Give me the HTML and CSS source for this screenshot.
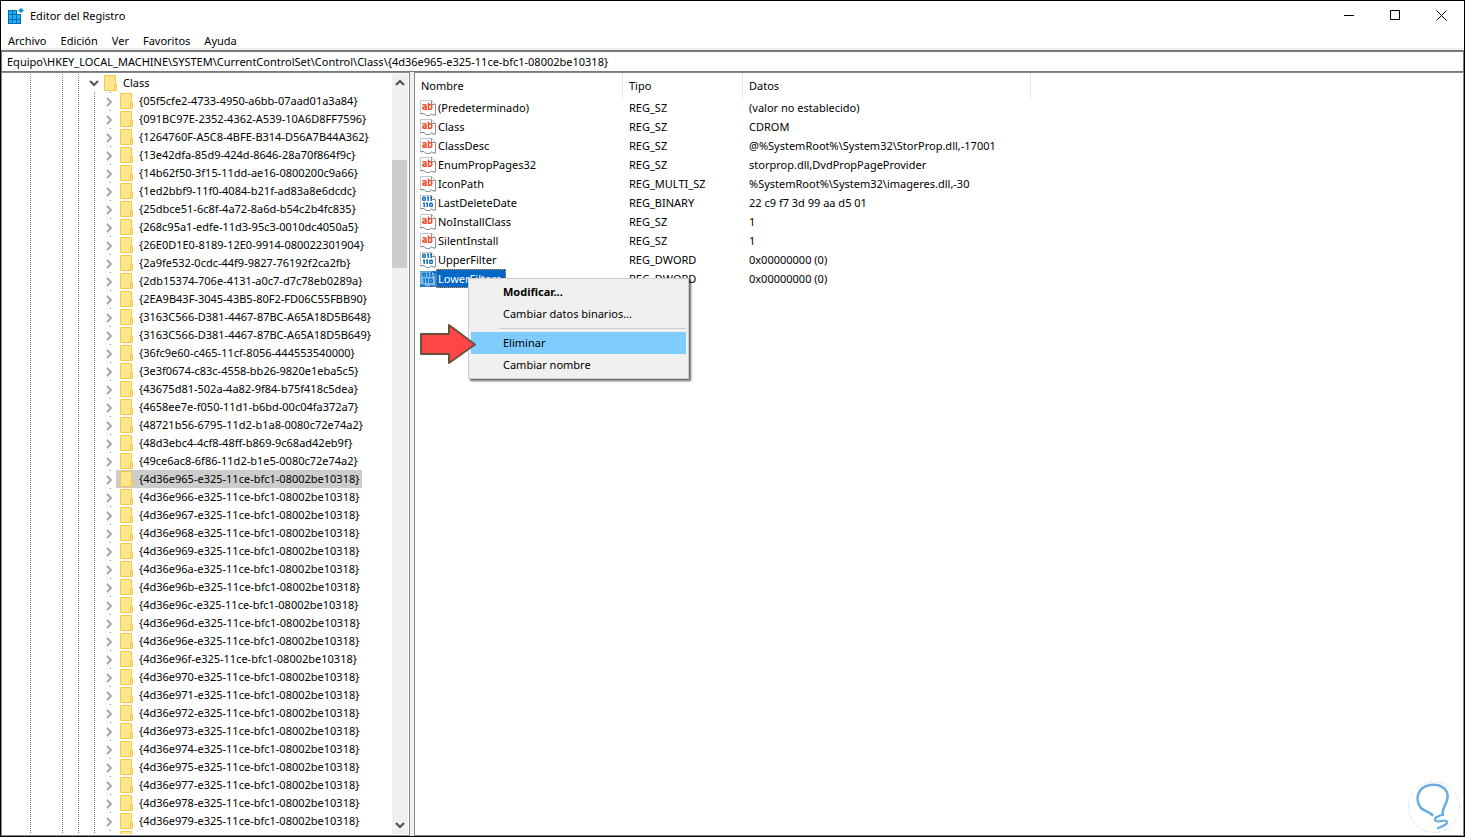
FILE: index.html
```html
<!DOCTYPE html>
<html lang="es">
<head>
<meta charset="utf-8">
<title>Editor del Registro</title>
<link rel="stylesheet" href="styles.css">
</head>
<body>
<svg class="sprite" aria-hidden="true">
  <symbol id="folder" viewBox="0 0 13 16"><path d="M.5.5h11v15H.5z" fill="#ffe68f" stroke="#fcc83c"/><path d="M10.500 9.500h2v6h-2z" fill="#ffe68f" stroke="#fcc83c"/></symbol>
  <symbol id="closed" viewBox="0 0 7 10"><path d="M1 1l4 4-4 4" fill="none" stroke="#a6a6a6" stroke-width="2"/></symbol>
  <symbol id="text" viewBox="0 0 16 16"><path d="M.5.5h11l4 4v10.500h-2l-2-1-2.500 1.500h-3L4 13.500l-2 .5H.5z" fill="#fff" stroke="#c4c6c8"/><path d="M11.500.5v4h4M15.500 4.500v10.500h-2l-2-1-2 1.500H6L4 13.500H.5" fill="none" stroke="#8a9299"/><g fill="none" stroke="#f04e2c" stroke-width="1.500"><path d="M2.500 4.700h2.500q1 0 1 1V10M6 7H4q-1.300 0-1.300 1.100T4 9.300h2M8.500 2.500V10M8.500 4.800h1.800q1.500 0 1.500 2.200t-1.500 2.200H8.500"/></g></symbol>
  <symbol id="binary" viewBox="0 0 16 16"><path d="M.5.5h11l4 4v10.500h-2l-2-1-2.500 1.500h-3L4 13.500l-2 .5H.5z" fill="#fff" stroke="#c4c6c8"/><path d="M11.500.5v4h4M15.500 4.500v10.500h-2l-2-1-2 1.500H6L4 13.500H.5" fill="none" stroke="#8a9299"/><g fill="none" stroke="#0868b8" stroke-width="1.400"><rect x="2.700" y="2.200" width="2.600" height="3.200" rx="1"/><path d="M7 2.200h1.200V6M10 2.200h1.200V6M3 8.200h1.200V12M6 8.200h1.200V12"/><rect x="9.700" y="8.200" width="2.600" height="3.200" rx="1"/></g></symbol>
</svg>
<div class="window">
  <header class="titlebar">
    <svg class="app-icon" viewBox="0 0 16 16" aria-hidden="true"><path d="M0 2h9v4h4v10H0z" fill="#0569b5"/><path d="M1 3h3v3H1zM5 3h3v3H5zM1 7h3v4H1zM5 7h3v4H5zM9 7h3v4H9zM1 12h3v3H1zM5 12h3v3H5zM9 12h3v3H9z" fill="#16b4f5"/><path d="M13 0l3 2.500-3 2.500-3-2.500z" fill="#1596d4"/></svg>
    <h1>Editor del Registro</h1>
    <div class="controls">
      <button aria-label="Minimizar"><svg viewBox="0 0 11 11"><path d="M0 5.500h10"/></svg></button>
      <button aria-label="Maximizar"><svg viewBox="0 0 11 11"><path d="M.5.5h9v9h-9z"/></svg></button>
      <button aria-label="Cerrar"><svg viewBox="0 0 11 11"><path d="M.5.5l10 10M10.500.5l-10 10"/></svg></button>
    </div>
  </header>
  <nav class="menubar"><button>Archivo</button><button>Edición</button><button>Ver</button><button>Favoritos</button><button>Ayuda</button></nav>
  <input class="address" aria-label="Ruta" value="Equipo\HKEY_LOCAL_MACHINE\SYSTEM\CurrentControlSet\Control\Class\{4d36e965-e325-11ce-bfc1-08002be10318}">
  <main class="panes">
    <section class="tree-pane">
      <div class="tree">
        <button class="node root"><svg class="open" viewBox="0 0 10 7"><path d="M1 1l4 4 4-4"/></svg><span><svg class="folder"><use href="#folder"/></svg>Class</span></button>
        <ul>
          <li><button class="node"><svg class="closed"><use href="#closed"/></svg><span><svg class="folder"><use href="#folder"/></svg>{05f5cfe2-4733-4950-a6bb-07aad01a3a84}</span></button></li>
          <li><button class="node"><svg class="closed"><use href="#closed"/></svg><span><svg class="folder"><use href="#folder"/></svg>{091BC97E-2352-4362-A539-10A6D8FF7596}</span></button></li>
          <li><button class="node"><svg class="closed"><use href="#closed"/></svg><span><svg class="folder"><use href="#folder"/></svg>{1264760F-A5C8-4BFE-B314-D56A7B44A362}</span></button></li>
          <li><button class="node"><svg class="closed"><use href="#closed"/></svg><span><svg class="folder"><use href="#folder"/></svg>{13e42dfa-85d9-424d-8646-28a70f864f9c}</span></button></li>
          <li><button class="node"><svg class="closed"><use href="#closed"/></svg><span><svg class="folder"><use href="#folder"/></svg>{14b62f50-3f15-11dd-ae16-0800200c9a66}</span></button></li>
          <li><button class="node"><svg class="closed"><use href="#closed"/></svg><span><svg class="folder"><use href="#folder"/></svg>{1ed2bbf9-11f0-4084-b21f-ad83a8e6dcdc}</span></button></li>
          <li><button class="node"><svg class="closed"><use href="#closed"/></svg><span><svg class="folder"><use href="#folder"/></svg>{25dbce51-6c8f-4a72-8a6d-b54c2b4fc835}</span></button></li>
          <li><button class="node"><svg class="closed"><use href="#closed"/></svg><span><svg class="folder"><use href="#folder"/></svg>{268c95a1-edfe-11d3-95c3-0010dc4050a5}</span></button></li>
          <li><button class="node"><svg class="closed"><use href="#closed"/></svg><span><svg class="folder"><use href="#folder"/></svg>{26E0D1E0-8189-12E0-9914-080022301904}</span></button></li>
          <li><button class="node"><svg class="closed"><use href="#closed"/></svg><span><svg class="folder"><use href="#folder"/></svg>{2a9fe532-0cdc-44f9-9827-76192f2ca2fb}</span></button></li>
          <li><button class="node"><svg class="closed"><use href="#closed"/></svg><span><svg class="folder"><use href="#folder"/></svg>{2db15374-706e-4131-a0c7-d7c78eb0289a}</span></button></li>
          <li><button class="node"><svg class="closed"><use href="#closed"/></svg><span><svg class="folder"><use href="#folder"/></svg>{2EA9B43F-3045-43B5-80F2-FD06C55FBB90}</span></button></li>
          <li><button class="node"><svg class="closed"><use href="#closed"/></svg><span><svg class="folder"><use href="#folder"/></svg>{3163C566-D381-4467-87BC-A65A18D5B648}</span></button></li>
          <li><button class="node"><svg class="closed"><use href="#closed"/></svg><span><svg class="folder"><use href="#folder"/></svg>{3163C566-D381-4467-87BC-A65A18D5B649}</span></button></li>
          <li><button class="node"><svg class="closed"><use href="#closed"/></svg><span><svg class="folder"><use href="#folder"/></svg>{36fc9e60-c465-11cf-8056-444553540000}</span></button></li>
          <li><button class="node"><svg class="closed"><use href="#closed"/></svg><span><svg class="folder"><use href="#folder"/></svg>{3e3f0674-c83c-4558-bb26-9820e1eba5c5}</span></button></li>
          <li><button class="node"><svg class="closed"><use href="#closed"/></svg><span><svg class="folder"><use href="#folder"/></svg>{43675d81-502a-4a82-9f84-b75f418c5dea}</span></button></li>
          <li><button class="node"><svg class="closed"><use href="#closed"/></svg><span><svg class="folder"><use href="#folder"/></svg>{4658ee7e-f050-11d1-b6bd-00c04fa372a7}</span></button></li>
          <li><button class="node"><svg class="closed"><use href="#closed"/></svg><span><svg class="folder"><use href="#folder"/></svg>{48721b56-6795-11d2-b1a8-0080c72e74a2}</span></button></li>
          <li><button class="node"><svg class="closed"><use href="#closed"/></svg><span><svg class="folder"><use href="#folder"/></svg>{48d3ebc4-4cf8-48ff-b869-9c68ad42eb9f}</span></button></li>
          <li><button class="node"><svg class="closed"><use href="#closed"/></svg><span><svg class="folder"><use href="#folder"/></svg>{49ce6ac8-6f86-11d2-b1e5-0080c72e74a2}</span></button></li>
          <li><button class="node current"><svg class="closed"><use href="#closed"/></svg><span><svg class="folder"><use href="#folder"/></svg>{4d36e965-e325-11ce-bfc1-08002be10318}</span></button></li>
          <li><button class="node"><svg class="closed"><use href="#closed"/></svg><span><svg class="folder"><use href="#folder"/></svg>{4d36e966-e325-11ce-bfc1-08002be10318}</span></button></li>
          <li><button class="node"><svg class="closed"><use href="#closed"/></svg><span><svg class="folder"><use href="#folder"/></svg>{4d36e967-e325-11ce-bfc1-08002be10318}</span></button></li>
          <li><button class="node"><svg class="closed"><use href="#closed"/></svg><span><svg class="folder"><use href="#folder"/></svg>{4d36e968-e325-11ce-bfc1-08002be10318}</span></button></li>
          <li><button class="node"><svg class="closed"><use href="#closed"/></svg><span><svg class="folder"><use href="#folder"/></svg>{4d36e969-e325-11ce-bfc1-08002be10318}</span></button></li>
          <li><button class="node"><svg class="closed"><use href="#closed"/></svg><span><svg class="folder"><use href="#folder"/></svg>{4d36e96a-e325-11ce-bfc1-08002be10318}</span></button></li>
          <li><button class="node"><svg class="closed"><use href="#closed"/></svg><span><svg class="folder"><use href="#folder"/></svg>{4d36e96b-e325-11ce-bfc1-08002be10318}</span></button></li>
          <li><button class="node"><svg class="closed"><use href="#closed"/></svg><span><svg class="folder"><use href="#folder"/></svg>{4d36e96c-e325-11ce-bfc1-08002be10318}</span></button></li>
          <li><button class="node"><svg class="closed"><use href="#closed"/></svg><span><svg class="folder"><use href="#folder"/></svg>{4d36e96d-e325-11ce-bfc1-08002be10318}</span></button></li>
          <li><button class="node"><svg class="closed"><use href="#closed"/></svg><span><svg class="folder"><use href="#folder"/></svg>{4d36e96e-e325-11ce-bfc1-08002be10318}</span></button></li>
          <li><button class="node"><svg class="closed"><use href="#closed"/></svg><span><svg class="folder"><use href="#folder"/></svg>{4d36e96f-e325-11ce-bfc1-08002be10318}</span></button></li>
          <li><button class="node"><svg class="closed"><use href="#closed"/></svg><span><svg class="folder"><use href="#folder"/></svg>{4d36e970-e325-11ce-bfc1-08002be10318}</span></button></li>
          <li><button class="node"><svg class="closed"><use href="#closed"/></svg><span><svg class="folder"><use href="#folder"/></svg>{4d36e971-e325-11ce-bfc1-08002be10318}</span></button></li>
          <li><button class="node"><svg class="closed"><use href="#closed"/></svg><span><svg class="folder"><use href="#folder"/></svg>{4d36e972-e325-11ce-bfc1-08002be10318}</span></button></li>
          <li><button class="node"><svg class="closed"><use href="#closed"/></svg><span><svg class="folder"><use href="#folder"/></svg>{4d36e973-e325-11ce-bfc1-08002be10318}</span></button></li>
          <li><button class="node"><svg class="closed"><use href="#closed"/></svg><span><svg class="folder"><use href="#folder"/></svg>{4d36e974-e325-11ce-bfc1-08002be10318}</span></button></li>
          <li><button class="node"><svg class="closed"><use href="#closed"/></svg><span><svg class="folder"><use href="#folder"/></svg>{4d36e975-e325-11ce-bfc1-08002be10318}</span></button></li>
          <li><button class="node"><svg class="closed"><use href="#closed"/></svg><span><svg class="folder"><use href="#folder"/></svg>{4d36e977-e325-11ce-bfc1-08002be10318}</span></button></li>
          <li><button class="node"><svg class="closed"><use href="#closed"/></svg><span><svg class="folder"><use href="#folder"/></svg>{4d36e978-e325-11ce-bfc1-08002be10318}</span></button></li>
          <li><button class="node"><svg class="closed"><use href="#closed"/></svg><span><svg class="folder"><use href="#folder"/></svg>{4d36e979-e325-11ce-bfc1-08002be10318}</span></button></li>
          <li><button class="node" aria-label="Clave siguiente"><svg class="closed"><use href="#closed"/></svg><span><svg class="folder"><use href="#folder"/></svg></span></button></li>
        </ul>
      </div>
      <div class="scrollbar">
        <button aria-label="Subir"><svg viewBox="0 0 10 7"><path d="M1 6l4-4 4 4"/></svg></button>
        <div class="track"><div class="thumb"></div></div>
        <button aria-label="Bajar"><svg viewBox="0 0 10 7"><path d="M1 1l4 4 4-4"/></svg></button>
      </div>
    </section>
    <section class="list-pane">
      <table>
        <colgroup><col class="c-name"><col class="c-type"><col class="c-data"></colgroup>
        <thead><tr><th>Nombre</th><th>Tipo</th><th>Datos</th></tr></thead>
        <tbody>
          <tr><td><div class="value"><svg><use href="#text"/></svg><span>(Predeterminado)</span></div></td><td>REG_SZ</td><td>(valor no establecido)</td></tr>
          <tr><td><div class="value"><svg><use href="#text"/></svg><span>Class</span></div></td><td>REG_SZ</td><td>CDROM</td></tr>
          <tr><td><div class="value"><svg><use href="#text"/></svg><span>ClassDesc</span></div></td><td>REG_SZ</td><td>@%SystemRoot%\System32\StorProp.dll,-17001</td></tr>
          <tr><td><div class="value"><svg><use href="#text"/></svg><span>EnumPropPages32</span></div></td><td>REG_SZ</td><td>storprop.dll,DvdPropPageProvider</td></tr>
          <tr><td><div class="value"><svg><use href="#text"/></svg><span>IconPath</span></div></td><td>REG_MULTI_SZ</td><td>%SystemRoot%\System32\imageres.dll,-30</td></tr>
          <tr><td><div class="value"><svg><use href="#binary"/></svg><span>LastDeleteDate</span></div></td><td>REG_BINARY</td><td>22 c9 f7 3d 99 aa d5 01</td></tr>
          <tr><td><div class="value"><svg><use href="#text"/></svg><span>NoInstallClass</span></div></td><td>REG_SZ</td><td>1</td></tr>
          <tr><td><div class="value"><svg><use href="#text"/></svg><span>SilentInstall</span></div></td><td>REG_SZ</td><td>1</td></tr>
          <tr><td><div class="value"><svg><use href="#binary"/></svg><span>UpperFilter</span></div></td><td>REG_DWORD</td><td>0x00000000 (0)</td></tr>
          <tr><td><div class="value selected"><i><svg><use href="#binary"/></svg></i><span>LowerFilters</span></div></td><td>REG_DWORD</td><td>0x00000000 (0)</td></tr>
        </tbody>
      </table>
      <div class="context-menu" role="menu">
        <button role="menuitem"><b>Modificar...</b></button>
        <button role="menuitem">Cambiar datos binarios...</button>
        <hr>
        <button role="menuitem" class="hot">Eliminar</button>
        <button role="menuitem">Cambiar nombre</button>
      </div>
      <svg class="pointer" viewBox="0 0 58 42" aria-hidden="true"><path d="M2 11h28V2l26 19.500L30 40V31H2z"/></svg>
      <svg class="bulb" viewBox="0 0 56 56" aria-hidden="true"><circle cx="28" cy="28" r="25.500" fill="none" stroke="#dfe8f4" stroke-dasharray="9 2"/><path d="M27 37c-3-5-8-4-12-8C8 20 12 8 24 6c12-2 20 6 17 15-1 6-6 9-4 16" fill="none" stroke="#69ade2" stroke-width="2.500"/><path d="M38 35.500c-5 1-10 3-9 6 2 3 11-2 12 1 1 3-5 5-10 7" fill="none" stroke="#69ade2" stroke-width="2.200"/></svg>
    </section>
  </main>
</div>
</body>
</html>
```
FILE: styles.css
```css
* { box-sizing: border-box; }
body { margin: 0; background: #fff; color: #000; font: 11px/18px "Noto Sans", "Open Sans", sans-serif; }
button { display: flex; align-items: center; margin: 0; padding: 0; border: 0; background: none; color: inherit; font: inherit; text-align: left; }
svg { display: block; flex: none; }
.sprite { position: absolute; width: 0; height: 0; }
.window { display: flex; flex-direction: column; height: 100vh; border: 1px solid #000; }

.titlebar { display: flex; align-items: center; height: 29px; padding-left: 7px; }
.app-icon { width: 16px; height: 16px; }
.titlebar h1 { flex: 1; margin: 0 0 0 6px; font-size: 11px; font-weight: 400; }
.controls { display: flex; }
.controls button { justify-content: center; width: 46px; height: 29px; }
.controls svg { width: 11px; height: 11px; fill: none; stroke: #000; }

.menubar { display: flex; gap: 14px; height: 20px; padding: 2px 0 0 7px; border-bottom: 2px solid #f0f0f0; }
.menubar button { height: 18px; }
.address { width: 100%; height: 22px; padding: 0 5px; border: 1px solid #747a7a; border-top-width: 2px; outline: 0; background: #fff; color: #000; font: inherit; }

.panes { display: flex; flex: 1; min-height: 0; gap: 4px; background: #f0f0f0; }
.tree-pane, .list-pane { border: 1px solid #828790; background: #fff; }
.tree-pane { display: flex; flex: 0 0 409px; overflow: hidden; padding: 1px 0; }
.tree { flex: 1; overflow: hidden;
  background-image: repeating-linear-gradient(#808080 0 1px, transparent 1px 2px), repeating-linear-gradient(#808080 0 1px, transparent 1px 2px), repeating-linear-gradient(#808080 0 1px, transparent 1px 2px), repeating-linear-gradient(#808080 0 1px, transparent 1px 2px), repeating-linear-gradient(#808080 0 1px, transparent 1px 18px);
  background-size: 1px 100%; background-position: 28px 0, 60px 0, 76px 0, 92px 18px, 108px 18px; background-repeat: no-repeat; }
.tree ul { margin: 0; padding: 0; list-style: none; }
.node { height: 18px; padding-left: 104px; }
.node.root { padding-left: 87px; }
.node span { display: flex; align-items: center; gap: 6px; height: 18px; padding: 0 3px 0 4px; white-space: nowrap; }
.node.current span { background: #ccc; }
.folder { width: 13px; height: 16px; }
.closed { width: 7px; height: 10px; margin: 2px 3px 0 0; }
.open { width: 10px; height: 7px; margin-right: 1px; fill: none; stroke: #555; stroke-width: 2; }
.scrollbar { display: flex; flex-direction: column; width: 17px; border-right: 1px solid #fff; background: #f0f0f0; }
.scrollbar button { justify-content: center; height: 17px; }
.scrollbar svg { width: 10px; height: 7px; fill: none; stroke: #554c43; stroke-width: 2; }
.track { flex: 1; padding-top: 69px; }
.thumb { width: 15px; height: 108px; background: #cdcdcd; }

.list-pane { position: relative; flex: 1; min-width: 0; }
table { table-layout: fixed; width: 616px; border-collapse: separate; border-spacing: 0; }
.c-name { width: 208px; }
.c-type { width: 120px; }
.c-data { width: 288px; }
th { height: 25px; padding: 0 6px; border-right: 1px solid #e5e5e5; font-weight: 400; text-align: left; }
td { height: 19px; padding: 0 6px; white-space: nowrap; }
td:first-child { padding: 0 0 0 5px; }
.value { display: flex; align-items: center; height: 19px; }
.value svg { width: 16px; height: 16px; }
.value span { padding: 0 2px; }
.selected i { background: #0078d7; }
.selected i svg { opacity: .5; }
.selected span { height: 19px; padding: 0 4px 0 1px; border: 1px dotted #e58a28; background: #0067c8; color: #fff; line-height: 17px; }

.context-menu { position: absolute; left: 53px; top: 205px; width: 221px; padding: 2px; border: 1px solid #ccc; background: #f0f0f0; box-shadow: 2px 2px 2px #0009; }
.context-menu button { width: 100%; height: 22px; padding-left: 32px; }
.context-menu hr { height: 1px; margin: 3px 0 3px 28px; border: 0; background: #ccc; }
.context-menu .hot { background: #80cbff; }
.pointer { position: absolute; left: 4px; top: 250px; width: 58px; height: 42px; }
.pointer path { fill: #ff4646; stroke: #66503e; stroke-width: 2; stroke-linejoin: round; }
.bulb { position: absolute; right: 1px; bottom: 0; width: 56px; height: 56px; }
```
